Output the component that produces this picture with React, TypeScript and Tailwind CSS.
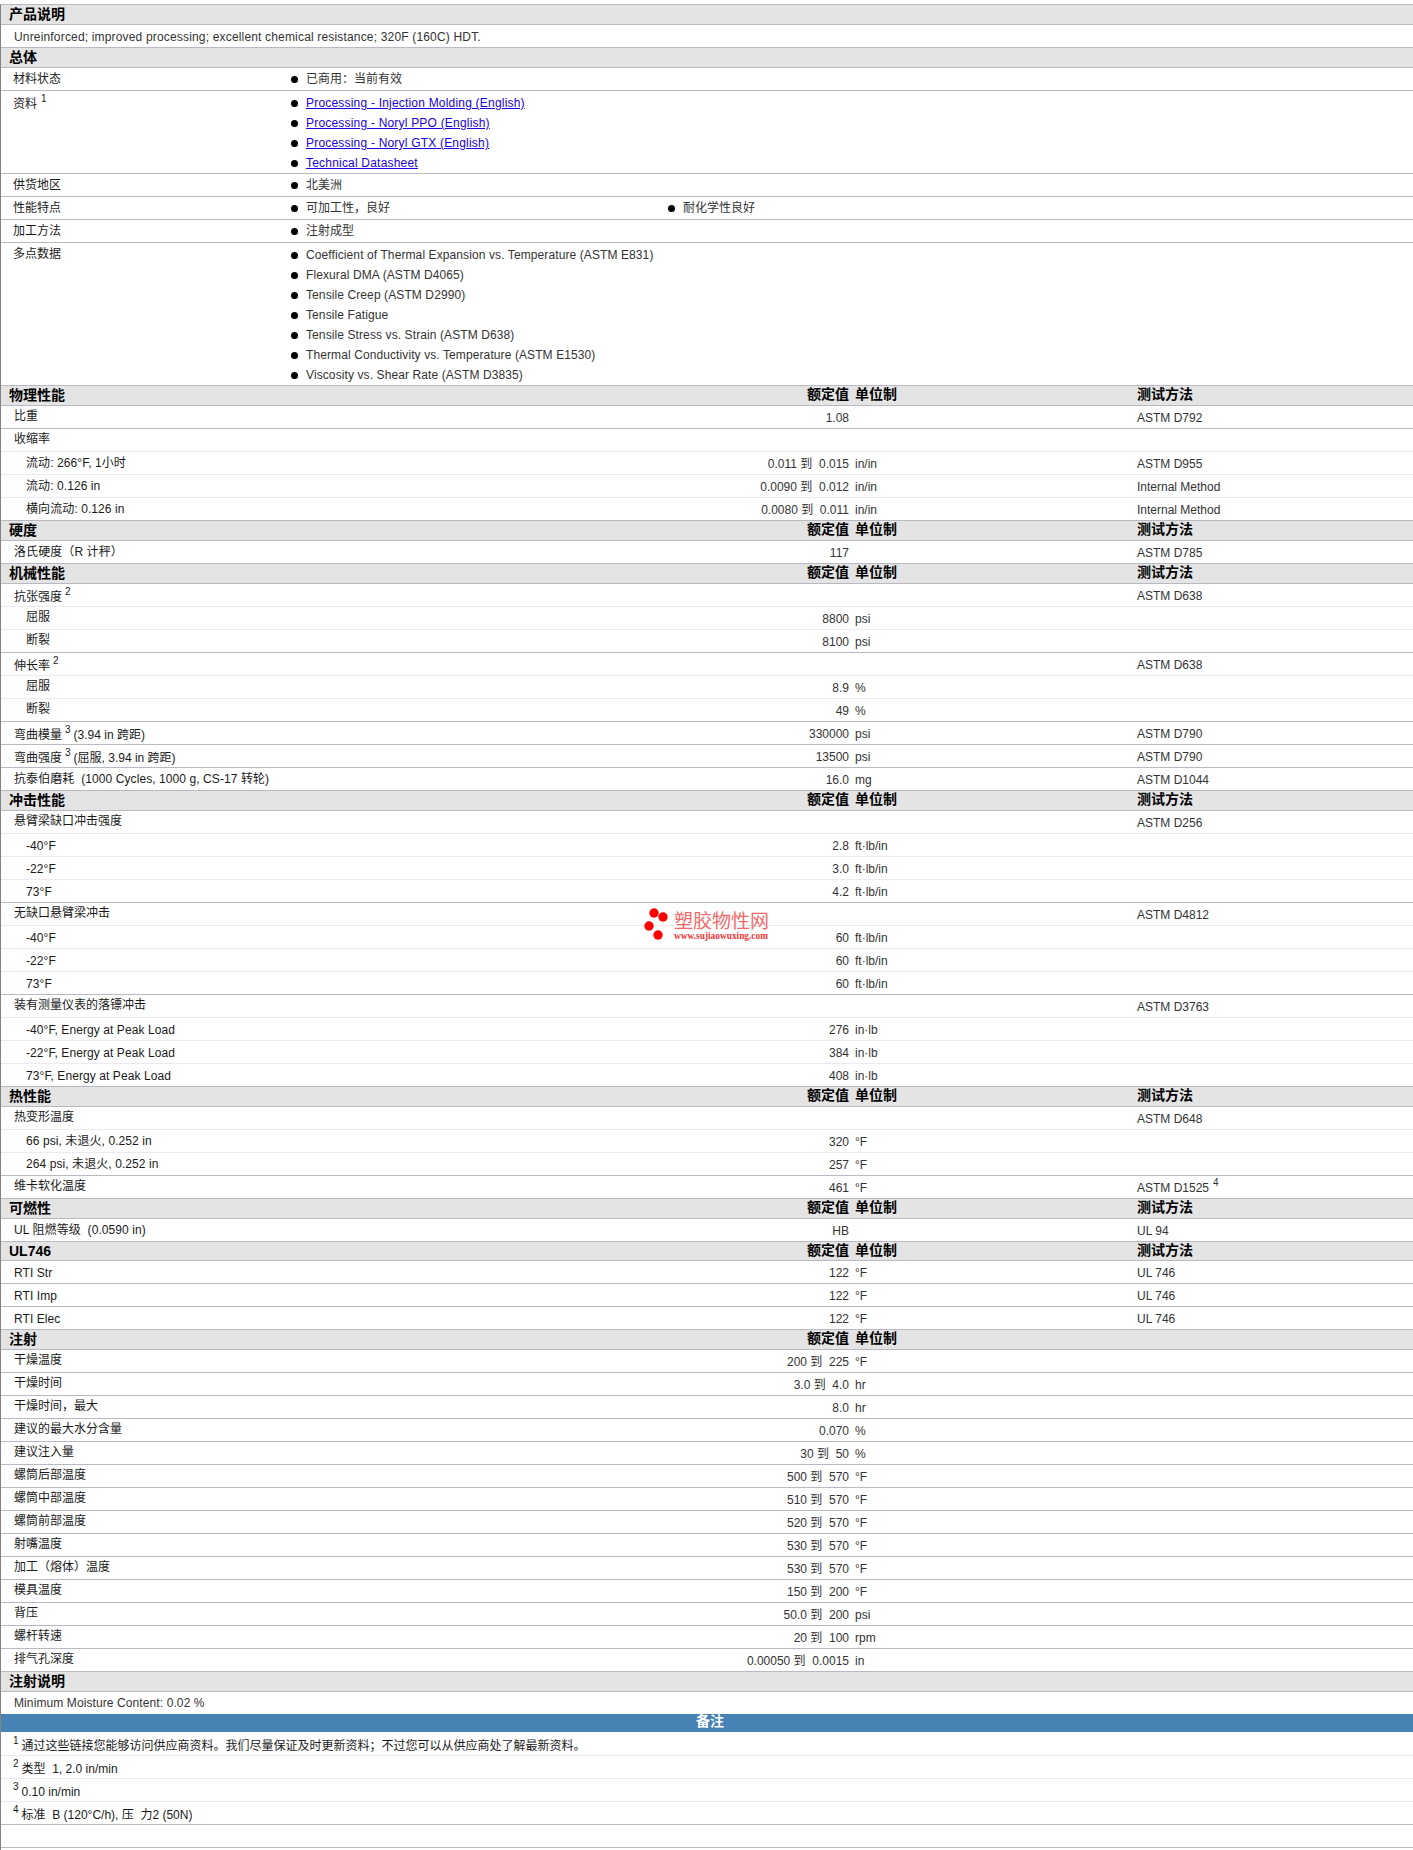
const FONT = '"Liberation Sans", "Noto Sans CJK SC", sans-serif'

type Row = {
  label?: string
  sup?: string
  after?: string
  indent?: boolean
  value?: string
  unit?: string
  method?: string
  methodSup?: string
  faint?: boolean
}

type Section = {
  title: string
  method?: boolean
  short?: boolean
  rows: Row[]
}

const sections: Section[] = [
  {
    title: '物理性能',
    method: true,
    rows: [
      { label: '比重', value: '1.08', method: 'ASTM D792' },
      { label: '收缩率', faint: true },
      { label: '流动: 266°F, 1小时', indent: true, value: '0.011 到  0.015', unit: 'in/in', method: 'ASTM D955', faint: true },
      { label: '流动: 0.126 in', indent: true, value: '0.0090 到  0.012', unit: 'in/in', method: 'Internal Method', faint: true },
      { label: '横向流动: 0.126 in', indent: true, value: '0.0080 到  0.011', unit: 'in/in', method: 'Internal Method' },
    ],
  },
  {
    title: '硬度',
    method: true,
    rows: [{ label: '洛氏硬度（R 计秤）', value: '117', method: 'ASTM D785' }],
  },
  {
    title: '机械性能',
    method: true,
    rows: [
      { label: '抗张强度', sup: '2', method: 'ASTM D638', faint: true },
      { label: '屈服', indent: true, value: '8800', unit: 'psi', faint: true },
      { label: '断裂', indent: true, value: '8100', unit: 'psi' },
      { label: '伸长率', sup: '2', method: 'ASTM D638', faint: true },
      { label: '屈服', indent: true, value: '8.9', unit: '%', faint: true },
      { label: '断裂', indent: true, value: '49', unit: '%' },
      { label: '弯曲模量', sup: '3', after: '(3.94 in 跨距)', value: '330000', unit: 'psi', method: 'ASTM D790' },
      { label: '弯曲强度', sup: '3', after: '(屈服, 3.94 in 跨距)', value: '13500', unit: 'psi', method: 'ASTM D790' },
      { label: '抗泰伯磨耗  (1000 Cycles, 1000 g, CS-17 转轮)', value: '16.0', unit: 'mg', method: 'ASTM D1044' },
    ],
  },
  {
    title: '冲击性能',
    method: true,
    rows: [
      { label: '悬臂梁缺口冲击强度', method: 'ASTM D256', faint: true },
      { label: '-40°F', indent: true, value: '2.8', unit: 'ft·lb/in', faint: true },
      { label: '-22°F', indent: true, value: '3.0', unit: 'ft·lb/in', faint: true },
      { label: '73°F', indent: true, value: '4.2', unit: 'ft·lb/in' },
      { label: '无缺口悬臂梁冲击', method: 'ASTM D4812', faint: true },
      { label: '-40°F', indent: true, value: '60', unit: 'ft·lb/in', faint: true },
      { label: '-22°F', indent: true, value: '60', unit: 'ft·lb/in', faint: true },
      { label: '73°F', indent: true, value: '60', unit: 'ft·lb/in' },
      { label: '装有测量仪表的落镖冲击', method: 'ASTM D3763', faint: true },
      { label: '-40°F, Energy at Peak Load', indent: true, value: '276', unit: 'in·lb', faint: true },
      { label: '-22°F, Energy at Peak Load', indent: true, value: '384', unit: 'in·lb', faint: true },
      { label: '73°F, Energy at Peak Load', indent: true, value: '408', unit: 'in·lb' },
    ],
  },
  {
    title: '热性能',
    method: true,
    rows: [
      { label: '热变形温度', method: 'ASTM D648', faint: true },
      { label: '66 psi, 未退火, 0.252 in', indent: true, value: '320', unit: '°F', faint: true },
      { label: '264 psi, 未退火, 0.252 in', indent: true, value: '257', unit: '°F' },
      { label: '维卡软化温度', value: '461', unit: '°F', method: 'ASTM D1525', methodSup: '4' },
    ],
  },
  {
    title: '可燃性',
    method: true,
    rows: [{ label: 'UL 阻燃等级  (0.0590 in)', value: 'HB', method: 'UL 94' }],
  },
  {
    title: 'UL746',
    method: true,
    short: true,
    rows: [
      { label: 'RTI Str', value: '122', unit: '°F', method: 'UL 746' },
      { label: 'RTI Imp', value: '122', unit: '°F', method: 'UL 746' },
      { label: 'RTI Elec', value: '122', unit: '°F', method: 'UL 746' },
    ],
  },
  {
    title: '注射',
    rows: [
      { label: '干燥温度', value: '200 到  225', unit: '°F' },
      { label: '干燥时间', value: '3.0 到  4.0', unit: 'hr' },
      { label: '干燥时间，最大', value: '8.0', unit: 'hr' },
      { label: '建议的最大水分含量', value: '0.070', unit: '%' },
      { label: '建议注入量', value: '30 到  50', unit: '%' },
      { label: '螺筒后部温度', value: '500 到  570', unit: '°F' },
      { label: '螺筒中部温度', value: '510 到  570', unit: '°F' },
      { label: '螺筒前部温度', value: '520 到  570', unit: '°F' },
      { label: '射嘴温度', value: '530 到  570', unit: '°F' },
      { label: '加工（熔体）温度', value: '530 到  570', unit: '°F' },
      { label: '模具温度', value: '150 到  200', unit: '°F' },
      { label: '背压', value: '50.0 到  200', unit: 'psi' },
      { label: '螺杆转速', value: '20 到  100', unit: 'rpm' },
      { label: '排气孔深度', value: '0.00050 到  0.0015', unit: 'in' },
    ],
  },
]

function Sup({ children, className }: { children: React.ReactNode; className?: string }) {
  return <sup className={`top-[-6px] text-[10px] ${className ?? ''}`}>{children}</sup>
}

function Head({ title, value, method, short }: { title: string; value?: boolean; method?: boolean; short?: boolean }) {
  return (
    <div className={`flex border-b border-[#b9b9c4] bg-[#e4e4e4] text-[14px] leading-[17px] font-bold text-black ${short ? 'h-[19px]' : 'h-[20px]'}`}>
      <div className="w-[600px] pt-px pl-[8px]">{title}</div>
      <div className="w-[248px] text-right">{value ? '额定值' : ''}</div>
      <div className="ml-[6px] w-[282px]">{value ? '单位制' : ''}</div>
      <div>{method ? '测试方法' : ''}</div>
    </div>
  )
}

function Bullet({ children }: { children: React.ReactNode }) {
  return (
    <div className="flex h-[20px] items-center">
      <span className="mr-[8px] ml-[1px] h-[7px] w-[7px] rounded-full bg-black" />
      <span>{children}</span>
    </div>
  )
}

function InfoRow({ label, sup, children, className }: { label: string; sup?: string; children: React.ReactNode; className?: string }) {
  return (
    <div className={`flex border-b border-[#b9b9c4] ${className ?? ''}`}>
      <div className={`w-[289px] pl-[12px] leading-[14px] text-[#1a1a1a] ${sup ? 'pt-[6px]' : 'pt-[4px]'}`}>
        {label}
        {sup ? <Sup className="ml-[4px]">{sup}</Sup> : null}
      </div>
      <div className="flex-1">{children}</div>
    </div>
  )
}

// labels sit a little lower the more latin text they hold
function labelPad(row: Row) {
  if (row.sup) return 'pt-[6px]'
  if (!row.label || !/[A-Za-z0-9]/.test(row.label)) return 'pt-[3px]'
  if (/^[\x00-\x7f°]+$/.test(row.label)) return 'pt-[5px] tracking-[0.08px]'
  return 'pt-[4px] tracking-[0.08px]'
}

function DataRow({ row }: { row: Row }) {
  return (
    <div className={`flex h-[23px] border-b ${row.faint ? 'border-[#ece9f0]' : 'border-[#b9b9c4]'}`}>
      <div className={`w-[600px] leading-[14px] whitespace-pre text-[#1a1a1a] ${labelPad(row)} ${row.indent ? 'pl-[25px]' : 'pl-[13px]'}`}>
        {row.label}
        {row.sup ? <Sup className="mr-[3px] ml-[3px]">{row.sup}</Sup> : null}
        {row.after}
      </div>
      <div className="w-[248px] pt-[5px] text-right leading-[14px] whitespace-pre">{row.value}</div>
      <div className="ml-[6px] w-[282px] pt-[5px] leading-[14px]">{row.unit}</div>
      <div className="pt-[5px] leading-[14px]">
        {row.method}
        {row.methodSup ? <Sup className="ml-[4px]">{row.methodSup}</Sup> : null}
      </div>
    </div>
  )
}

function Note({ n, first, children }: { n: string; first?: boolean; children: React.ReactNode }) {
  return (
    <div className={`border-b border-[#ece9f0] pl-[12px] leading-[14px] whitespace-pre text-[#1a1a1a] ${first ? 'h-[24px] pt-[7px]' : 'h-[23px] pt-[6px]'}`}>
      <Sup className="mr-[3px]">{n}</Sup>
      {children}
    </div>
  )
}

function Watermark() {
  return (
    <div className="pointer-events-none absolute top-[908px] left-[644px] h-[34px] w-[126px]">
      <svg width="30" height="34" viewBox="0 0 30 34" className="absolute top-0 left-0">
        <circle cx="10" cy="5" r="4.7" fill="#f00" />
        <circle cx="19" cy="9" r="4.7" fill="#f00" />
        <circle cx="5" cy="18" r="4.7" fill="#f00" />
        <circle cx="14" cy="27" r="4.7" fill="#f00" />
      </svg>
      <div className="absolute top-[3px] left-[30px] text-[19px] leading-[22px] whitespace-nowrap text-[#f46a6a]">塑胶物性网</div>
      <div className="absolute top-[23px] left-[30px] font-['Liberation_Serif'] text-[9.35px] leading-[10px] font-bold whitespace-nowrap text-[#f03838]">
        www.sujiaowuxing.com
      </div>
    </div>
  )
}

export default function App() {
  return (
    <div className="relative h-[1850px] w-[1413px] overflow-hidden bg-white text-[12px] text-[#333]" style={{ fontFamily: FONT }}>
      <div className="mt-[4px] border-t border-l border-t-[#b9b9c4] border-l-[#85827e] pb-[2px]">
        <Head title="产品说明" />
        <div className="h-[23px] border-b border-[#b9b9c4] pt-[4px] pl-[13px] leading-[16px] tracking-[0.17px]">
          Unreinforced; improved processing; excellent chemical resistance; 320F (160C) HDT.
        </div>
        <Head title="总体" />
        <InfoRow label="材料状态" className="h-[23px]">
          <div className="pt-px">
            <Bullet>已商用：当前有效</Bullet>
          </div>
        </InfoRow>
        <InfoRow label="资料" sup="1" className="h-[83px]">
          <div className="pt-[2px] tracking-[0.2px]">
            {['Processing - Injection Molding (English)', 'Processing - Noryl PPO (English)', 'Processing - Noryl GTX (English)', 'Technical Datasheet'].map((t) => (
              <Bullet key={t}>
                <a className="text-[#1a00e0] underline">{t}</a>
              </Bullet>
            ))}
          </div>
        </InfoRow>
        <InfoRow label="供货地区" className="h-[23px]">
          <div className="pt-px">
            <Bullet>北美洲</Bullet>
          </div>
        </InfoRow>
        <InfoRow label="性能特点" className="h-[23px]">
          <div className="flex pt-px">
            <div className="w-[377px]">
              <Bullet>可加工性，良好</Bullet>
            </div>
            <Bullet>耐化学性良好</Bullet>
          </div>
        </InfoRow>
        <InfoRow label="加工方法" className="h-[23px]">
          <div className="pt-px">
            <Bullet>注射成型</Bullet>
          </div>
        </InfoRow>
        <InfoRow label="多点数据" className="h-[143px]">
          <div className="pt-[2px] tracking-[0.1px]">
            {[
              'Coefficient of Thermal Expansion vs. Temperature (ASTM E831)',
              'Flexural DMA (ASTM D4065)',
              'Tensile Creep (ASTM D2990)',
              'Tensile Fatigue',
              'Tensile Stress vs. Strain (ASTM D638)',
              'Thermal Conductivity vs. Temperature (ASTM E1530)',
              'Viscosity vs. Shear Rate (ASTM D3835)',
            ].map((t) => (
              <Bullet key={t}>{t}</Bullet>
            ))}
          </div>
        </InfoRow>
        {sections.map((s) => (
          <div key={s.title}>
            <Head title={s.title} value method={s.method} short={s.short} />
            {s.rows.map((r, i) => (
              <DataRow key={i} row={r} />
            ))}
          </div>
        ))}
        <Head title="注射说明" />
        <div className="h-[22px] pt-[3px] pl-[13px] leading-[16px] tracking-[0.1px]">Minimum Moisture Content: 0.02 %</div>
        <div className="h-[18px] bg-[#4682b4] pl-[6px] text-center text-[14px] leading-[15px] font-bold text-white">备注</div>
        <Note n="1" first>
          通过这些链接您能够访问供应商资料。我们尽量保证及时更新资料；不过您可以从供应商处了解最新资料。
        </Note>
        <Note n="2">类型  1, 2.0 in/min</Note>
        <Note n="3">0.10 in/min</Note>
        <div className="h-[23px] border-b border-[#b9b9c4] pt-[6px] pl-[12px] leading-[14px] whitespace-pre text-[#1a1a1a]">
          <Sup className="mr-[3px]">4</Sup>标准  B (120°C/h), 压  力2 (50N)
        </div>
        <div className="h-[23px] border-b border-[#b9b9c4]" />
      </div>
      <Watermark />
    </div>
  )
}
